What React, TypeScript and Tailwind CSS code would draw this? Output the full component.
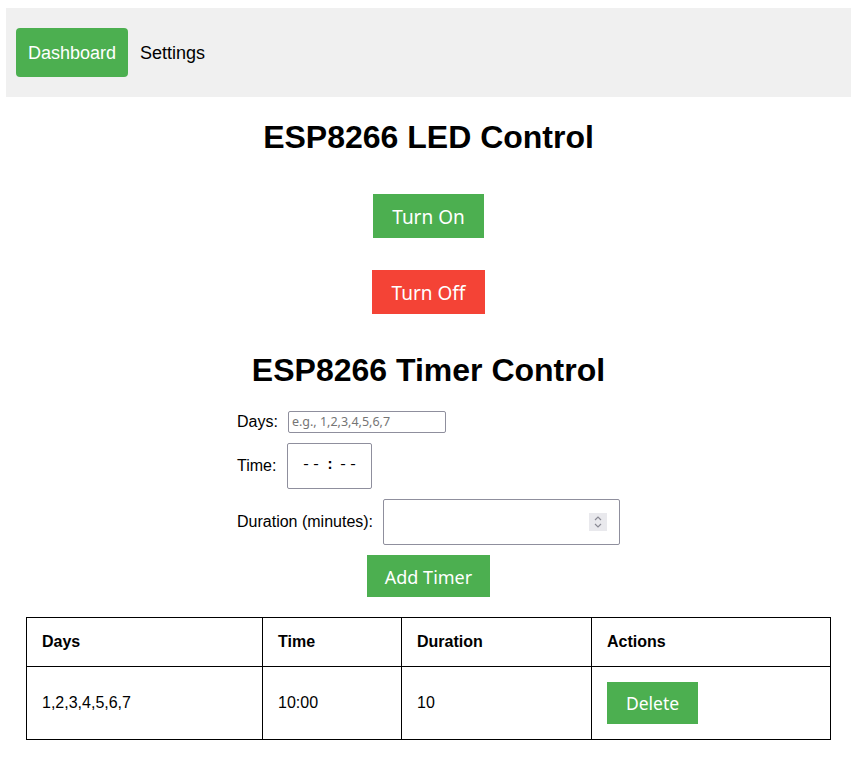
import React from "react";

const arial = { fontFamily: '"Liberation Sans", Arial, sans-serif' };

export default function App() {
  return (
    <div className="min-h-[776px] bg-white text-black" style={arial}>
      <div className="ml-[6px] w-[845px] pt-[8px]">
        {/* Nav */}
        <nav className="flex h-[89px] items-start bg-[#f0f0f0] pl-[10px] pt-[20px]">
          <a className="flex h-[49px] items-center rounded-[4px] bg-[#4caf50] px-[12px] pt-[2px] text-[18px] text-white">
            Dashboard
          </a>
          <a className="flex h-[49px] items-center px-[12px] pt-[2px] text-[18px] text-black">Settings</a>
        </nav>

        <div className="flex flex-col items-center">
          <h1 className="mt-[22px] text-[32px] font-bold leading-[37px]">ESP8266 LED Control</h1>

          <button className="mt-[38px] flex h-[44px] w-[111px] items-center justify-center bg-[#4caf50] pt-[2px] text-[19px] text-white font-['Noto_Sans',sans-serif]">
            Turn On
          </button>
          <button className="mt-[32px] flex h-[44px] w-[113px] items-center justify-center bg-[#f44336] pt-[2px] text-[19px] text-white font-['Noto_Sans',sans-serif]">
            Turn Off
          </button>

          <h2 className="mt-[38px] text-[32px] font-bold leading-[37px]">ESP8266 Timer Control</h2>

          <div className="mt-[22px] flex w-[383px] flex-col gap-[10px] text-[16px]">
            <div className="flex items-center gap-[10px]">
              <span className="leading-[18px]">Days:</span>
              <div className="flex h-[22px] w-[158px] items-center rounded-[2px] border border-[#8f8f9d] px-[3px] text-[12.5px] text-[#757575] font-['Noto_Sans',sans-serif]">
                e.g., 1,2,3,4,5,6,7
              </div>
            </div>
            <div className="flex items-center gap-[11px]">
              <span className="leading-[18px]">Time:</span>
              <div className="flex h-[46px] w-[85px] items-center justify-center rounded-[2px] border border-[#8f8f9d] text-[15px] font-['Liberation_Mono',monospace]">
                <span className="tracking-[1px]">--</span>
                <span className="mx-[4px] font-bold">:</span>
                <span className="tracking-[1px]">--</span>
              </div>
            </div>
            <div className="flex items-center gap-[10px]">
              <span className="leading-[18px]">Duration (minutes):</span>
              <div className="flex h-[46px] w-[237px] items-center justify-end rounded-[2px] border border-[#8f8f9d] pr-[12px]">
                <div className="flex h-[18px] w-[18px] items-center justify-center bg-[#e9e9ed]">
                  <svg width="10" height="14" viewBox="0 0 10 14" fill="none" stroke="#8a8a94" strokeWidth="1.2">
                    <path d="M2 5 L5 2 L8 5" />
                    <path d="M2 9 L5 12 L8 9" />
                  </svg>
                </div>
              </div>
            </div>
          </div>

          <button className="mt-[10px] flex h-[42px] w-[123px] items-center justify-center bg-[#4caf50] pt-[2px] text-[18px] text-white font-['Noto_Sans',sans-serif]">
            Add Timer
          </button>
        </div>

        <div className="mt-[20px] px-[20px]">
          <table className="w-[805px] border-collapse text-[16px]">
            <thead>
              <tr className="h-[49px]">
                <th className="w-[236px] border border-black pl-[15px] text-left font-bold">Days</th>
                <th className="w-[139px] border border-black pl-[15px] text-left font-bold">Time</th>
                <th className="w-[190px] border border-black pl-[15px] text-left font-bold">Duration</th>
                <th className="border border-black pl-[15px] text-left font-bold">Actions</th>
              </tr>
            </thead>
            <tbody>
              <tr className="h-[73px]">
                <td className="border border-black pl-[15px]">1,2,3,4,5,6,7</td>
                <td className="border border-black pl-[15px]">10:00</td>
                <td className="border border-black pl-[15px]">10</td>
                <td className="border border-black pl-[15px]">
                  <button className="flex h-[42px] w-[91px] items-center justify-center bg-[#4caf50] pt-[1px] text-[17.5px] text-white font-['Noto_Sans',sans-serif]">
                    Delete
                  </button>
                </td>
              </tr>
            </tbody>
          </table>
        </div>
      </div>
    </div>
  );
}
